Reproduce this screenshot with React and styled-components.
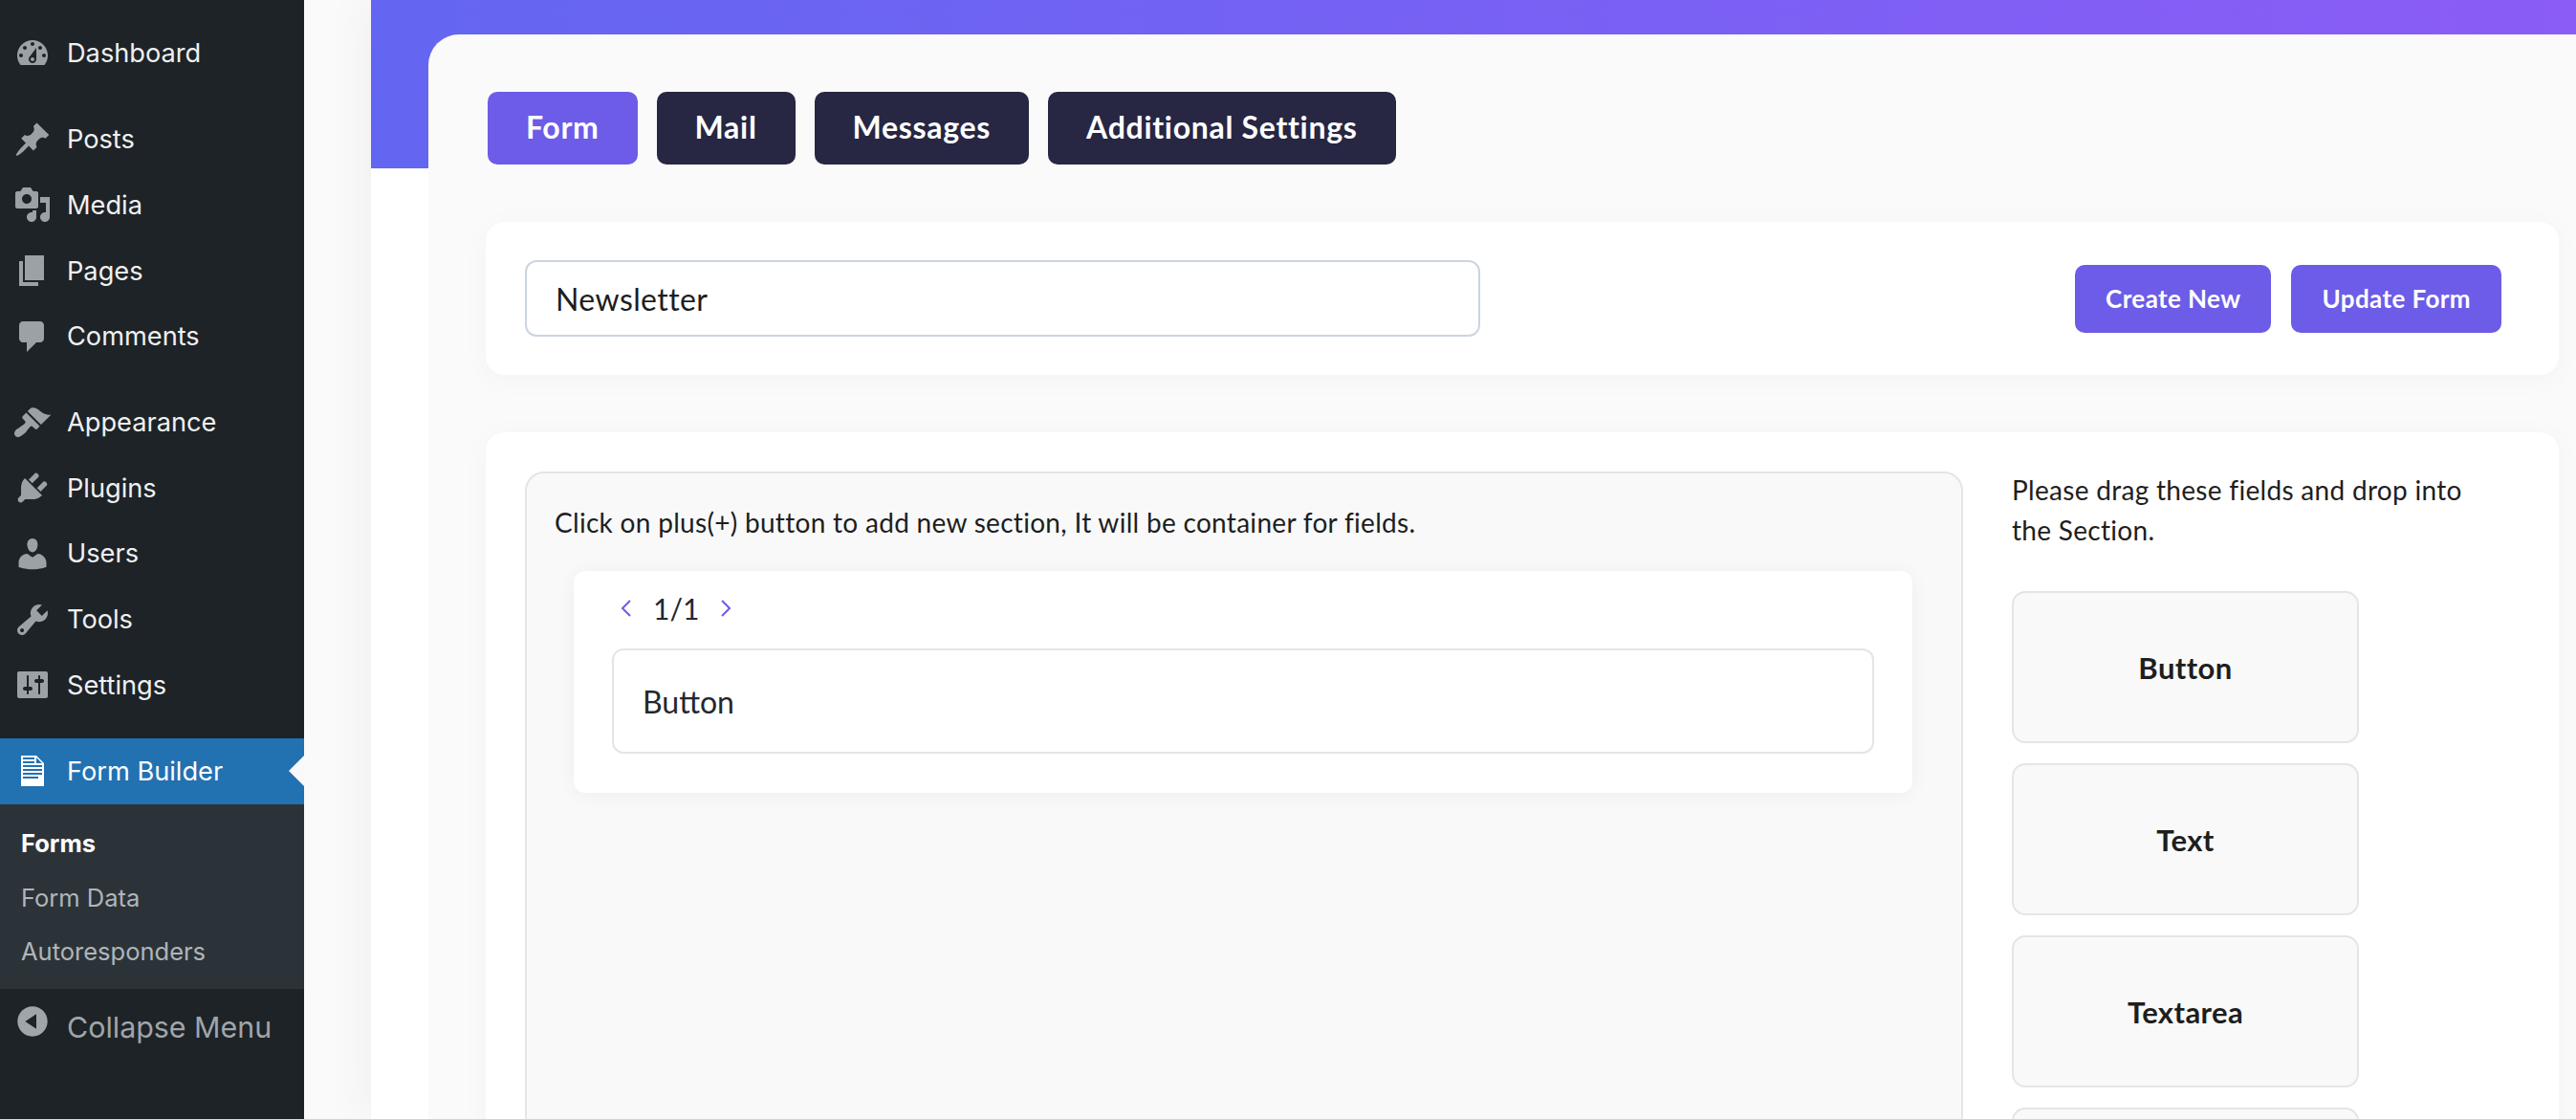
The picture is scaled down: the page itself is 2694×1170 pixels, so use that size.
import React from 'react'
import styled, { createGlobalStyle } from 'styled-components'

const GlobalStyle = createGlobalStyle`
  html, body {
    margin: 0;
    padding: 0;
    height: 1170px;
    overflow: hidden;
    background: #fff;
  }
  * { box-sizing: border-box; }
`

const Shell = styled.div`
  display: flex;
  width: 2694px;
  height: 1170px;
  overflow: hidden;
  background: #fafafa;
  font-family: Lato, "Open Sans", sans-serif;
`

/* wp admin sidebar */
const Sidebar = styled.nav`
  flex: 0 0 318px;
  display: flex;
  flex-direction: column;
  padding-top: 21.5px;
  background: #1d2327;
  font-family: Inter, "Liberation Sans", sans-serif;
`

const MenuGroup = styled.div`
  display: flex;
  flex-direction: column;
  margin-bottom: 21.5px;
`

const MenuItem = styled.a`
  position: relative;
  display: flex;
  align-items: center;
  height: 68.6px;
  padding-left: 14px;
  font-size: 27.2px;
  color: ${p => (p.$active ? '#fff' : '#f0f0f1')};
  background: ${p => (p.$active ? '#2271b1' : 'transparent')};
  svg {
    flex: 0 0 40px;
    width: 40px;
    height: 40px;
    margin-right: 16px;
    fill: ${p => (p.$active ? '#fff' : '#9ca1a7')};
  }
`

const ActiveArrow = styled.span`
  position: absolute;
  right: 0;
  top: 18px;
  width: 0;
  height: 0;
  border: 16px solid transparent;
  border-right-color: #f9f9f9;
`

const SubMenu = styled.div`
  display: flex;
  flex-direction: column;
  height: 193px;
  padding-top: 13px;
  background: #2c3338;
`

const SubItem = styled.a`
  display: flex;
  align-items: center;
  height: 56.5px;
  padding-left: 22px;
  font-size: 25.5px;
  font-weight: ${p => (p.$active ? 700 : 400)};
  color: ${p => (p.$active ? '#fff' : '#b0b5b9')};
`

const CollapseRow = styled.div`
  display: flex;
  align-items: flex-start;
  padding: 14px 0 0 14px;
  font-size: 30.4px;
  color: #a0a5aa;
  svg {
    flex: 0 0 40px;
    width: 40px;
    height: 40px;
    margin-right: 16px;
    fill: #a0a5aa;
  }
  span {
    line-height: 52px;
  }
`

const Main = styled.main`
  flex: 1;
  min-width: 0;
  margin-left: 70px;
  background: #fff;
  box-shadow: 0 0 50px rgba(0, 0, 0, 0.06);
`

const Banner = styled.div`
  height: 176px;
  background: linear-gradient(90deg, #6366f1, #8b5cf6);
`

const Panel = styled.div`
  display: flex;
  flex-direction: column;
  gap: 60px;
  margin: -140px 0 0 60px;
  padding: 60px 18px 0 60px;
  height: 1134px;
  border-top-left-radius: 32px;
  background: #fafafa;
`

const Tabs = styled.div`
  flex: none;
  display: flex;
  gap: 20px;
  padding-left: 2px;
`

const Tab = styled.button`
  height: 76px;
  padding: 0 40px 3px;
  border: 0;
  border-radius: 10px;
  font-family: inherit;
  font-size: 32px;
  font-weight: 700;
  letter-spacing: 0.7px;
  color: #fff;
  background: ${p => (p.$active ? '#6c5ce7' : '#272643')};
`

const Card = styled.section`
  border-radius: 20px;
  background: #fff;
  box-shadow: 0 4px 30px rgba(0, 0, 0, 0.03);
`

const TitleCard = styled(Card)`
  flex: none;
  display: flex;
  align-items: center;
  gap: 21px;
  height: 160px;
  padding: 0 60px 0 41px;
`

const TitleInput = styled.div`
  display: flex;
  align-items: center;
  width: 999px;
  height: 80px;
  margin-right: auto;
  padding-left: 30px;
  border: 2px solid #cbd5e1;
  border-radius: 12px;
  font-size: 32px;
  letter-spacing: 0.4px;
  color: #1e1e1e;
`

const PrimaryButton = styled.button`
  height: 71px;
  padding: 0 32px;
  border: 0;
  border-radius: 10px;
  font-family: inherit;
  font-size: 26px;
  font-weight: 700;
  letter-spacing: 0.4px;
  color: #fff;
  background: #6c5ce7;
`

const BuilderCard = styled(Card)`
  flex: 1;
  display: flex;
  gap: 51px;
  padding: 41px 41px 0;
`

const Canvas = styled.div`
  flex: 0 0 1504px;
  height: 800px;
  padding: 30px 51px 0 29px;
  border: 2px solid #e5e5e5;
  border-radius: 20px;
  background: #f9f9f9;
`

const Hint = styled.p`
  margin: 0;
  font-size: 28px;
  line-height: 42px;
  letter-spacing: 0.3px;
  color: #1e1e1e;
`

const Section = styled.div`
  display: flex;
  flex-direction: column;
  height: 232px;
  margin: 30px 0 0 20px;
  padding: 0 40px 40px;
  border-radius: 12px;
  background: #fff;
  box-shadow: 0 2px 20px rgba(0, 0, 0, 0.05);
`

const Pager = styled.div`
  display: flex;
  align-items: center;
  gap: 22px;
  height: 81px;
  padding: 0 0 4px 9px;
  font-size: 30px;
  color: #23282d;
  svg {
    width: 12px;
    height: 18px;
    fill: none;
    stroke: #6c5ce7;
    stroke-width: 2;
  }
`

const Field = styled.div`
  display: flex;
  align-items: center;
  height: 110px;
  padding-left: 30px;
  border: 2px solid #e5e5e5;
  border-radius: 12px;
  font-size: 32px;
  color: #23282d;
`

const Palette = styled.aside`
  flex: 1;
  display: flex;
  flex-direction: column;
  gap: 21px;
`

const PaletteHint = styled(Hint)`
  width: 490px;
  margin: -2px 0 22px;
`

const PaletteItem = styled.div`
  flex: 0 0 159px;
  display: flex;
  align-items: center;
  justify-content: center;
  width: 363px;
  border: 2px solid #e5e5e5;
  border-radius: 14px;
  font-size: 31px;
  font-weight: 700;
  letter-spacing: 0.4px;
  color: #1e1e1e;
  background: #f9f9f9;
`

const Dashicon = ({ d }) => (
  <svg viewBox="0 0 20 20" aria-hidden="true">
    <path fillRule="evenodd" d={d} />
  </svg>
)

const icons = {
  dashboard: 'M3.76 16h12.48c1.1-1.37 1.76-3.11 1.76-5 0-4.42-3.58-8-8-8s-8 3.58-8 8c0 1.89.66 3.63 1.76 5zM10 4c.55 0 1 .45 1 1s-.45 1-1 1-1-.45-1-1 .45-1 1-1zM6 6c.55 0 1 .45 1 1s-.45 1-1 1-1-.45-1-1 .45-1 1-1zm8 0c.55 0 1 .45 1 1s-.45 1-1 1-1-.45-1-1 .45-1 1-1zm-5.37 5.55L12 7v6c0 1.1-.9 2-2 2s-2-.9-2-2c0-.57.24-1.08.63-1.45zM4 10c.55 0 1 .45 1 1s-.45 1-1 1-1-.45-1-1 .45-1 1-1zm12 0c.55 0 1 .45 1 1s-.45 1-1 1-1-.45-1-1 .45-1 1-1zm-5 3c0-.55-.45-1-1-1s-1 .45-1 1 .45 1 1 1 1-.45 1-1z',
  post: 'M10.44 3.02l1.82-1.82 6.36 6.35-1.83 1.82c-1.05-.68-2.48-.57-3.41.36l-.75.75c-.92.93-1.04 2.35-.35 3.41l-1.83 1.82-2.41-2.41-2.8 2.79c-.42.42-3.38 2.71-3.8 2.29s1.86-3.39 2.28-3.81l2.79-2.79L4.1 9.36l1.83-1.82c1.05.69 2.48.57 3.4-.36l.75-.75c.93-.92 1.05-2.35.36-3.41z',
  media: 'M13 11V4c0-.55-.45-1-1-1h-1.67L9 1H5L3.67 3H2c-.55 0-1 .45-1 1v7c0 .55.45 1 1 1h10c.55 0 1-.45 1-1zM7 4.5c1.38 0 2.5 1.12 2.5 2.5S8.38 9.5 7 9.5 4.5 8.38 4.5 7 5.62 4.5 7 4.5zM14 6h5v10.5c0 1.38-1.12 2.5-2.5 2.5S14 17.88 14 16.5s1.12-2.5 2.5-2.5c.17 0 .34.02.5.05V9h-3V6zm-4 8.05V13h2v3.5c0 1.38-1.12 2.5-2.5 2.5S7 17.88 7 16.5 8.12 14 9.5 14c.17 0 .34.02.5.05z',
  page: 'M6 15V2h10v13H6zm-1 1h8v2H3V5h2v11z',
  comments: 'M5 2h9c1.1 0 2 .9 2 2v7c0 1.1-.9 2-2 2h-2l-5 5v-5H5c-1.1 0-2-.9-2-2V4c0-1.1.9-2 2-2z',
  appearance: 'M14.48 11.06L7.41 3.99l1.5-1.5c.5-.56 2.3-.47 3.51.32 1.21.8 1.43 1.28 2.91 2.1 1.18.64 2.45 1.26 4.45.85zm-.71.71L6.7 4.7 4.93 6.47c-.39.39-.39 1.02 0 1.41l1.06 1.06c.39.39.39 1.03 0 1.42-.6.6-1.43 1.11-2.21 1.69-.35.26-.7.53-1.01.84C1.43 13.23.5 14.75.5 15.66c0 1.1.9 1.9 1.9 1.9.89 0 2.44-.93 3.8-2.27.31-.31.58-.66.84-1.01.58-.78 1.09-1.61 1.69-2.21.39-.39 1.03-.39 1.42 0l1.06 1.06c.39.39 1.02.39 1.41 0z',
  plugins: 'M13.11 4.36L9.87 7.6 8 5.73l3.24-3.24c.35-.34 1.05-.2 1.56.32.52.51.66 1.21.31 1.55zm-8 1.77l.91-1.12 9.01 9.01-1.19.84c-.71.71-2.63 1.16-3.82 1.16H6.14L4.9 17.26c-.59.59-1.54.59-2.12 0-.59-.58-.59-1.53 0-2.12l1.24-1.24v-3.88c0-1.13.4-3.19 1.09-3.89zm7.26 3.97l3.24-3.24c.34-.35 1.04-.21 1.55.31.52.51.66 1.21.31 1.55l-3.24 3.25z',
  users: 'M10 9.25c-2.27 0-2.73-3.44-2.73-3.44C7 4.02 7.82 2 9.97 2c2.16 0 2.98 2.02 2.71 3.81 0 0-.41 3.44-2.68 3.44zm0 2.57L12.72 10c2.39 0 4.52 2.33 4.52 4.53v2.49s-3.65 1.13-7.24 1.13c-3.65 0-7.24-1.13-7.24-1.13v-2.49c0-2.25 1.94-4.48 4.47-4.48z',
  tools: 'M16.68 9.77c-1.34 1.34-3.3 1.67-4.95.99l-5.41 6.52c-.99.99-2.59.99-3.58 0s-.99-2.59 0-3.57l6.52-5.42c-.68-1.65-.35-3.61.99-4.95 1.28-1.28 3.12-1.62 4.72-1.06l-2.89 2.89 2.82 2.82 2.86-2.87c.53 1.58.18 3.39-1.08 4.65zM3.81 16.21c.4.39 1.04.39 1.43 0 .4-.4.4-1.04 0-1.43-.39-.4-1.03-.4-1.43 0-.39.39-.39 1.03 0 1.43z',
  settings: 'M18 16V4c0-.55-.45-1-1-1H3c-.55 0-1 .45-1 1v12c0 .55.45 1 1 1h14c.55 0 1-.45 1-1zM8 11h1c.55 0 1 .45 1 1s-.45 1-1 1H8v1.5c0 .28-.22.5-.5.5s-.5-.22-.5-.5V13H6c-.55 0-1-.45-1-1s.45-1 1-1h1V5.5c0-.28.22-.5.5-.5s.5.22.5.5V11zm5-2h-1c-.55 0-1-.45-1-1s.45-1 1-1h1V5.5c0-.28.22-.5.5-.5s.5.22.5.5V7h1c.55 0 1 .45 1 1s-.45 1-1 1h-1v5.5c0 .28-.22.5-.5.5s-.5-.22-.5-.5V9z',
  document: 'M12 2l4 4v12H4V2h8zM5 3v1h6V3H5zm7 3h3l-3-3v3zM5 5v1h6V5H5zm10 3V7H5v1h10zM5 9v1h10V9H5zm10 3v-1H5v1h10zm-2 2v-1H5v1h8z',
  collapse: 'M10 2.16c4.33 0 7.84 3.51 7.84 7.84s-3.51 7.84-7.84 7.84S2.16 14.33 2.16 10 5.71 2.16 10 2.16zm2 11.72V6.12L6.18 9.97z',
}

const menuGroups = [
  [['Dashboard', 'dashboard']],
  [['Posts', 'post'], ['Media', 'media'], ['Pages', 'page'], ['Comments', 'comments']],
  [['Appearance', 'appearance'], ['Plugins', 'plugins'], ['Users', 'users'], ['Tools', 'tools'], ['Settings', 'settings']],
]

const tabs = ['Form', 'Mail', 'Messages', 'Additional Settings']
const fields = ['Button', 'Text', 'Textarea', 'Select']

export default function App() {
  return (
    <Shell>
      <GlobalStyle />
      <Sidebar>
        {menuGroups.map((group, i) => (
          <MenuGroup key={i}>
            {group.map(([label, icon]) => (
              <MenuItem key={label}>
                <Dashicon d={icons[icon]} />
                {label}
              </MenuItem>
            ))}
          </MenuGroup>
        ))}
        <MenuItem $active>
          <Dashicon d={icons.document} />
          Form Builder
          <ActiveArrow />
        </MenuItem>
        <SubMenu>
          <SubItem $active>Forms</SubItem>
          <SubItem>Form Data</SubItem>
          <SubItem>Autoresponders</SubItem>
        </SubMenu>
        <CollapseRow>
          <Dashicon d={icons.collapse} />
          <span>Collapse Menu</span>
        </CollapseRow>
      </Sidebar>
      <Main>
        <Banner />
        <Panel>
          <Tabs>
            {tabs.map((tab, i) => (
              <Tab key={tab} $active={i === 0}>{tab}</Tab>
            ))}
          </Tabs>
          <TitleCard>
            <TitleInput>Newsletter</TitleInput>
            <PrimaryButton>Create New</PrimaryButton>
            <PrimaryButton>Update Form</PrimaryButton>
          </TitleCard>
          <BuilderCard>
            <Canvas>
              <Hint>Click on plus(+) button to add new section, It will be container for fields.</Hint>
              <Section>
                <Pager>
                  <svg viewBox="0 0 12 18"><path d="M10 1 L2 9 L10 17" /></svg>
                  <span>1/1</span>
                  <svg viewBox="0 0 12 18"><path d="M2 1 L10 9 L2 17" /></svg>
                </Pager>
                <Field>Button</Field>
              </Section>
            </Canvas>
            <Palette>
              <PaletteHint>Please drag these fields and drop into the Section.</PaletteHint>
              {fields.map(field => (
                <PaletteItem key={field}>{field}</PaletteItem>
              ))}
            </Palette>
          </BuilderCard>
        </Panel>
      </Main>
    </Shell>
  )
}
